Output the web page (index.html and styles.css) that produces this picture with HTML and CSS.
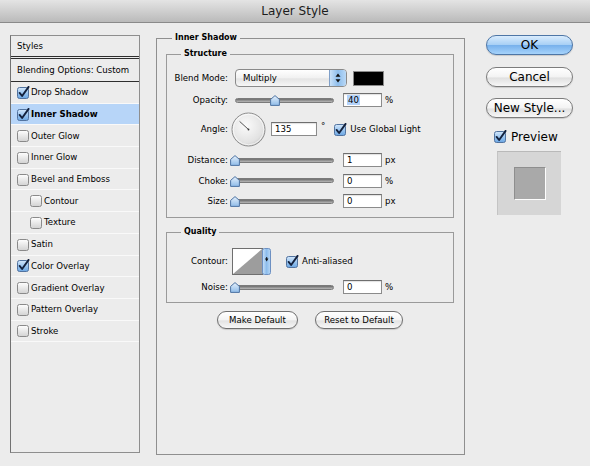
FILE: index.html
```html
<!DOCTYPE html>
<html>
<head>
<meta charset="utf-8">
<title>Layer Style</title>
<link rel="stylesheet" href="styles.css">
</head>
<body>
<svg class="defs" width="0" height="0" aria-hidden="true">
  <defs>
    <linearGradient id="gOff" x1="0" y1="0" x2="0" y2="1">
      <stop offset="0" stop-color="#ffffff"/>
      <stop offset="1" stop-color="#d2d2d2"/>
    </linearGradient>
    <linearGradient id="gOn" x1="0" y1="0" x2="0" y2="1">
      <stop offset="0" stop-color="#d3e7fb"/>
      <stop offset="0.5" stop-color="#9cc6f0"/>
      <stop offset="1" stop-color="#6aa5e2"/>
    </linearGradient>
    <linearGradient id="gBlue" x1="0" y1="0" x2="1" y2="0">
      <stop offset="0" stop-color="#c9e1f8"/>
      <stop offset="0.5" stop-color="#8dbdec"/>
      <stop offset="1" stop-color="#b9d8f6"/>
    </linearGradient>
    <linearGradient id="gThumb" x1="0" y1="0" x2="0" y2="1">
      <stop offset="0" stop-color="#e6f1fc"/>
      <stop offset="1" stop-color="#8ebbe8"/>
    </linearGradient>
    <radialGradient id="gDial" cx="0.42" cy="0.38" r="0.65">
      <stop offset="0" stop-color="#fbfbfb"/>
      <stop offset="0.8" stop-color="#e2e2e2"/>
      <stop offset="1" stop-color="#c8c8c8"/>
    </radialGradient>
    <symbol id="cbOff" viewBox="0 0 13 13">
      <rect x="0.5" y="1.5" width="11" height="11" rx="2" fill="url(#gOff)" stroke="#8a8a8a"/>
    </symbol>
    <symbol id="cbOn" viewBox="0 0 13 13">
      <rect x="0.5" y="1.5" width="11" height="11" rx="2" fill="url(#gOn)" stroke="#52739f"/>
      <path d="M2.6 6.9 L5.1 10 L11.6 0.9" fill="none" stroke="#13213d" stroke-width="1.9" stroke-linecap="round" stroke-linejoin="round"/>
    </symbol>
    <symbol id="thumb" viewBox="0 0 10 11">
      <path d="M5 0.6 L9.4 4.4 L9.4 10.4 L0.6 10.4 L0.6 4.4 Z" fill="url(#gThumb)" stroke="#4f74a3" stroke-width="1"/>
    </symbol>
  </defs>
</svg>

<div class="titlebar">Layer Style</div>

<div class="main">
  <div class="panel">
    <div class="p-head">Styles</div>
    <div class="p-blend">Blending Options: Custom</div>
    <div class="p-row"><svg class="cb"><use href="#cbOn"/></svg><span>Drop Shadow</span></div>
    <div class="p-row sel"><svg class="cb"><use href="#cbOn"/></svg><span>Inner Shadow</span></div>
    <div class="p-row"><svg class="cb"><use href="#cbOff"/></svg><span>Outer Glow</span></div>
    <div class="p-row"><svg class="cb"><use href="#cbOff"/></svg><span>Inner Glow</span></div>
    <div class="p-row"><svg class="cb"><use href="#cbOff"/></svg><span>Bevel and Emboss</span></div>
    <div class="p-row sub"><svg class="cb"><use href="#cbOff"/></svg><span>Contour</span></div>
    <div class="p-row sub"><svg class="cb"><use href="#cbOff"/></svg><span>Texture</span></div>
    <div class="p-row"><svg class="cb"><use href="#cbOff"/></svg><span>Satin</span></div>
    <div class="p-row"><svg class="cb"><use href="#cbOn"/></svg><span>Color Overlay</span></div>
    <div class="p-row"><svg class="cb"><use href="#cbOff"/></svg><span>Gradient Overlay</span></div>
    <div class="p-row"><svg class="cb"><use href="#cbOff"/></svg><span>Pattern Overlay</span></div>
    <div class="p-row"><svg class="cb"><use href="#cbOff"/></svg><span>Stroke</span></div>
  </div>

  <fieldset class="fs-outer">
    <legend>Inner Shadow</legend>

    <fieldset class="fs fs-structure">
      <legend>Structure</legend>
      <div class="row r-blend">
        <span class="lbl">Blend Mode:</span>
        <div class="select">
          <span class="sel-text">Multiply</span>
          <span class="sel-arrow">
            <svg width="10" height="12" viewBox="0 0 10 12"><path d="M5 1.5 L7.5 4.8 L2.5 4.8 Z M5 10.5 L7.5 7.2 L2.5 7.2 Z" fill="#111"/></svg>
          </span>
        </div>
        <span class="swatch"></span>
      </div>
      <div class="row r-slider r-first">
        <span class="lbl">Opacity:</span>
        <div class="slider"><div class="track"></div><svg class="thumb" style="left:40%"><use href="#thumb"/></svg></div>
        <span class="field"><span class="hl">40</span></span>
        <span class="unit">%</span>
      </div>
      <div class="row r-angle">
        <span class="lbl">Angle:</span>
        <svg class="dial" width="35" height="35" viewBox="0 0 35 35">
          <circle cx="17.5" cy="17.5" r="16.5" fill="url(#gDial)" stroke="#8d8d8d"/>
          <circle cx="17.5" cy="17.5" r="15.3" fill="none" stroke="#ffffff" stroke-opacity="0.7"/>
          <line x1="17.5" y1="17.5" x2="8.6" y2="9.4" stroke="#555" stroke-width="1"/>
          <circle cx="17.5" cy="17.5" r="0.9" fill="#333"/>
        </svg>
        <span class="field f-angle">135</span>
        <span class="deg">°</span>
        <svg class="cb cb-gl"><use href="#cbOn"/></svg>
        <span class="cb-text">Use Global Light</span>
      </div>
      <div class="row r-slider r-dist">
        <span class="lbl">Distance:</span>
        <div class="slider"><div class="track"></div><svg class="thumb" style="left:0%"><use href="#thumb"/></svg></div>
        <span class="field">1</span>
        <span class="unit">px</span>
      </div>
      <div class="row r-slider r-next">
        <span class="lbl">Choke:</span>
        <div class="slider"><div class="track"></div><svg class="thumb" style="left:0%"><use href="#thumb"/></svg></div>
        <span class="field">0</span>
        <span class="unit">%</span>
      </div>
      <div class="row r-slider r-next">
        <span class="lbl">Size:</span>
        <div class="slider"><div class="track"></div><svg class="thumb" style="left:0%"><use href="#thumb"/></svg></div>
        <span class="field">0</span>
        <span class="unit">px</span>
      </div>
    </fieldset>

    <fieldset class="fs fs-quality">
      <legend>Quality</legend>
      <div class="row r-contour">
        <span class="lbl">Contour:</span>
        <svg class="contour" width="39" height="27" viewBox="0 0 39 27">
          <rect x="0.5" y="0.5" width="30" height="26" fill="#ffffff" stroke="#6f6f6f"/>
          <polygon points="1,26 30,1 30,26" fill="#9d9d9d"/>
          <rect x="30.5" y="0.5" width="8" height="26" rx="2" fill="url(#gBlue)" stroke="#6d90c2"/>
          <path d="M33 10.5 H36.4 L34.7 13.6 Z" fill="#111"/>
          <rect x="34.2" y="9" width="1" height="2" fill="#111"/>
        </svg>
        <svg class="cb cb-aa"><use href="#cbOn"/></svg>
        <span class="cb-text">Anti-aliased</span>
      </div>
      <div class="row r-slider r-noise">
        <span class="lbl">Noise:</span>
        <div class="slider"><div class="track"></div><svg class="thumb" style="left:0%"><use href="#thumb"/></svg></div>
        <span class="field">0</span>
        <span class="unit">%</span>
      </div>
    </fieldset>

    <div class="defaults">
      <span class="pill pill-make">Make Default</span>
      <span class="pill pill-reset">Reset to Default</span>
    </div>
  </fieldset>

  <div class="side">
    <span class="abtn ok">OK</span>
    <span class="abtn">Cancel</span>
    <span class="abtn">New Style...</span>
    <div class="preview-check"><svg class="cb cb-big"><use href="#cbOn"/></svg><span>Preview</span></div>
    <div class="preview-box"><div class="preview-sq"></div></div>
  </div>
</div>
</body>
</html>
```

FILE: styles.css
```css
html, body {
  margin: 0;
  padding: 0;
}
body {
  width: 590px;
  height: 466px;
  overflow: hidden;
  background: #ececec;
  font-family: "DejaVu Sans", "Liberation Sans", sans-serif;
  font-size: 8.6px;
  color: #000;
}
.defs {
  position: absolute;
  width: 0;
  height: 0;
  overflow: hidden;
}

/* title bar */
.titlebar {
  height: 22px;
  line-height: 23px;
  text-align: center;
  font-size: 12px;
  color: #1c1c1c;
  background: linear-gradient(#e4e4e4, #bababa);
  border-bottom: 1px solid #8a8a8a;
}

.main {
  display: flex;
  align-items: flex-start;
  padding-left: 10px;
}

/* left list */
.panel {
  box-sizing: border-box;
  width: 130px;
  height: 418px;
  margin-top: 12px;
  border: 1px solid #8e8e8e;
  border-left-color: #727272;
}
.p-head {
  height: 20px;
  line-height: 20px;
  padding-left: 6px;
  border-bottom: 3px double #2e2e2e;
}
.p-blend {
  height: 22px;
  line-height: 23px;
  padding-left: 6px;
  border-bottom: 1px solid #2e2e2e;
}
.p-row {
  box-sizing: border-box;
  height: 21.7px;
  display: flex;
  align-items: center;
  gap: 1px;
  padding-left: 6px;
  border-bottom: 1px solid #f9f9f9;
}
.p-row.sub {
  padding-left: 19px;
}
.p-row.sel {
  background: #b7d5f8;
  font-weight: bold;
}
.cb {
  width: 13px;
  height: 13px;
  flex: none;
}

/* middle */
.fs-outer {
  box-sizing: border-box;
  width: 309px;
  height: 423px;
  min-width: 0;
  margin: 9px 0 0 16px;
  padding: 4px 10px 0 9px;
  border: 1px solid #8f8f8f;
}
legend {
  font-weight: bold;
  font-size: 8px;
  line-height: 12px;
  padding: 0 3px;
}
.fs-outer > legend {
  margin-left: 6px;
}
.fs {
  min-width: 0;
  margin: 0;
  border: 1px solid #9a9a9a;
}
.fs > legend {
  margin-left: 14px;
}
.fs-structure {
  padding: 9px 0 9px 0;
}
.fs-quality {
  margin-top: 8px;
  padding: 10px 0 8px 0;
}

.row {
  display: flex;
  align-items: center;
}
.lbl {
  flex: none;
  width: 61px;
  text-align: right;
}
.r-blend { height: 18px; }
.r-slider { height: 14px; }
.r-first { margin-top: 6px; }
.r-angle { height: 34px; margin-top: 5px; }
.r-dist { margin-top: 7px; }
.r-next { margin-top: 6.5px; }
.r-contour { height: 26px; }
.r-noise { margin-top: 6px; }

.select {
  box-sizing: border-box;
  display: flex;
  align-items: stretch;
  width: 112px;
  height: 18px;
  margin-left: 7px;
  border: 1px solid #8a8a8a;
  border-radius: 4px;
  background: linear-gradient(#ffffff, #f1f1f1 50%, #e4e4e4 55%, #f6f6f6);
  overflow: hidden;
}
.sel-text {
  flex: 1;
  padding-left: 7px;
  line-height: 16px;
}
.sel-arrow {
  width: 16px;
  display: flex;
  align-items: center;
  justify-content: center;
  border-left: 1px solid #7f9fc8;
  background: linear-gradient(90deg, #c9e1f8, #8dbdec 50%, #b9d8f6);
}
.swatch {
  box-sizing: border-box;
  width: 31px;
  height: 15px;
  margin-left: 6px;
  background: #000;
  border: 1px solid #8a8a8a;
}

.slider {
  position: relative;
  flex: none;
  width: 99px;
  height: 14px;
  margin-left: 7px;
  display: flex;
  align-items: center;
}
.track {
  box-sizing: border-box;
  width: 100%;
  height: 5px;
  border-radius: 3px;
  background: linear-gradient(#6b6b6b, #9a9a9a 60%, #b8b8b8);
  border: 1px solid #7a7a7a;
}
.thumb {
  position: absolute;
  top: 2px;
  width: 10px;
  height: 11px;
  margin-left: -5px;
}
.field {
  box-sizing: border-box;
  flex: none;
  width: 39px;
  height: 14px;
  margin-left: 9px;
  padding-left: 3px;
  line-height: 13px;
  background: #fff;
  border: 1px solid #8b8b8b;
  border-top-color: #6e6e6e;
  box-shadow: inset 0 1px 1px rgba(0,0,0,0.12);
}
.hl {
  background: #b4d3fb;
  padding: 0 1px;
}
.unit {
  margin-left: 3px;
}
.dial {
  flex: none;
  margin-left: 3px;
}
.f-angle {
  width: 46px;
  margin-left: 5px;
}
.deg {
  align-self: flex-start;
  margin-top: 9px;
  margin-left: 4px;
}
.cb-gl {
  margin-left: 9px;
}
.cb-text {
  margin-left: 3px;
}
.contour {
  flex: none;
  margin-left: 4px;
}
.cb-aa {
  margin-left: 15px;
}

.defaults {
  display: flex;
  justify-content: center;
  gap: 17px;
  margin-top: 8px;
}
.pill {
  box-sizing: border-box;
  height: 18px;
  line-height: 16px;
  border: 1px solid #6f6f6f;
  border-radius: 9px;
  text-align: center;
  background: linear-gradient(#ffffff, #f3f3f3 50%, #e3e3e3 55%, #f7f7f7);
  box-shadow: 0 1px 1px rgba(0,0,0,0.15);
}
.pill-make { width: 81px; }
.pill-reset { width: 88px; }

/* right side */
.side {
  flex: none;
  width: 87px;
  margin: 12px 0 0 21px;
  display: flex;
  flex-direction: column;
}
.abtn {
  box-sizing: border-box;
  height: 20px;
  line-height: 18px;
  margin-bottom: 11.5px;
  border: 1px solid #7c7c7c;
  border-radius: 10px;
  text-align: center;
  font-size: 12px;
  background: linear-gradient(#ffffff, #f3f3f3 50%, #e0e0e0 55%, #f7f7f7);
  box-shadow: 0 1px 1px rgba(0,0,0,0.15);
}
.abtn.ok {
  border-color: #4e76a6;
  background: linear-gradient(#d9ecfd, #a9d0f5 48%, #78b1ec 52%, #a6d3fb);
}
.preview-check {
  display: flex;
  align-items: center;
  gap: 4px;
  height: 13px;
  margin-top: 0.5px;
  padding-left: 8px;
  font-size: 12px;
}
.cb-big {
  width: 13px;
  height: 13px;
}
.preview-box {
  box-sizing: border-box;
  width: 64px;
  height: 64px;
  margin: 8px 0 0 11px;
  display: flex;
  align-items: center;
  justify-content: center;
  background: #d6d6d6;
  border-top: 1px solid #b9b9b9;
  border-left: 1px solid #c4c4c4;
}
.preview-sq {
  box-sizing: border-box;
  width: 32px;
  height: 33px;
  background: #a9a9a9;
  border: 1px solid #8e8e8e;
  border-right-color: #fdfdfd;
  border-bottom-color: #fdfdfd;
}
```
